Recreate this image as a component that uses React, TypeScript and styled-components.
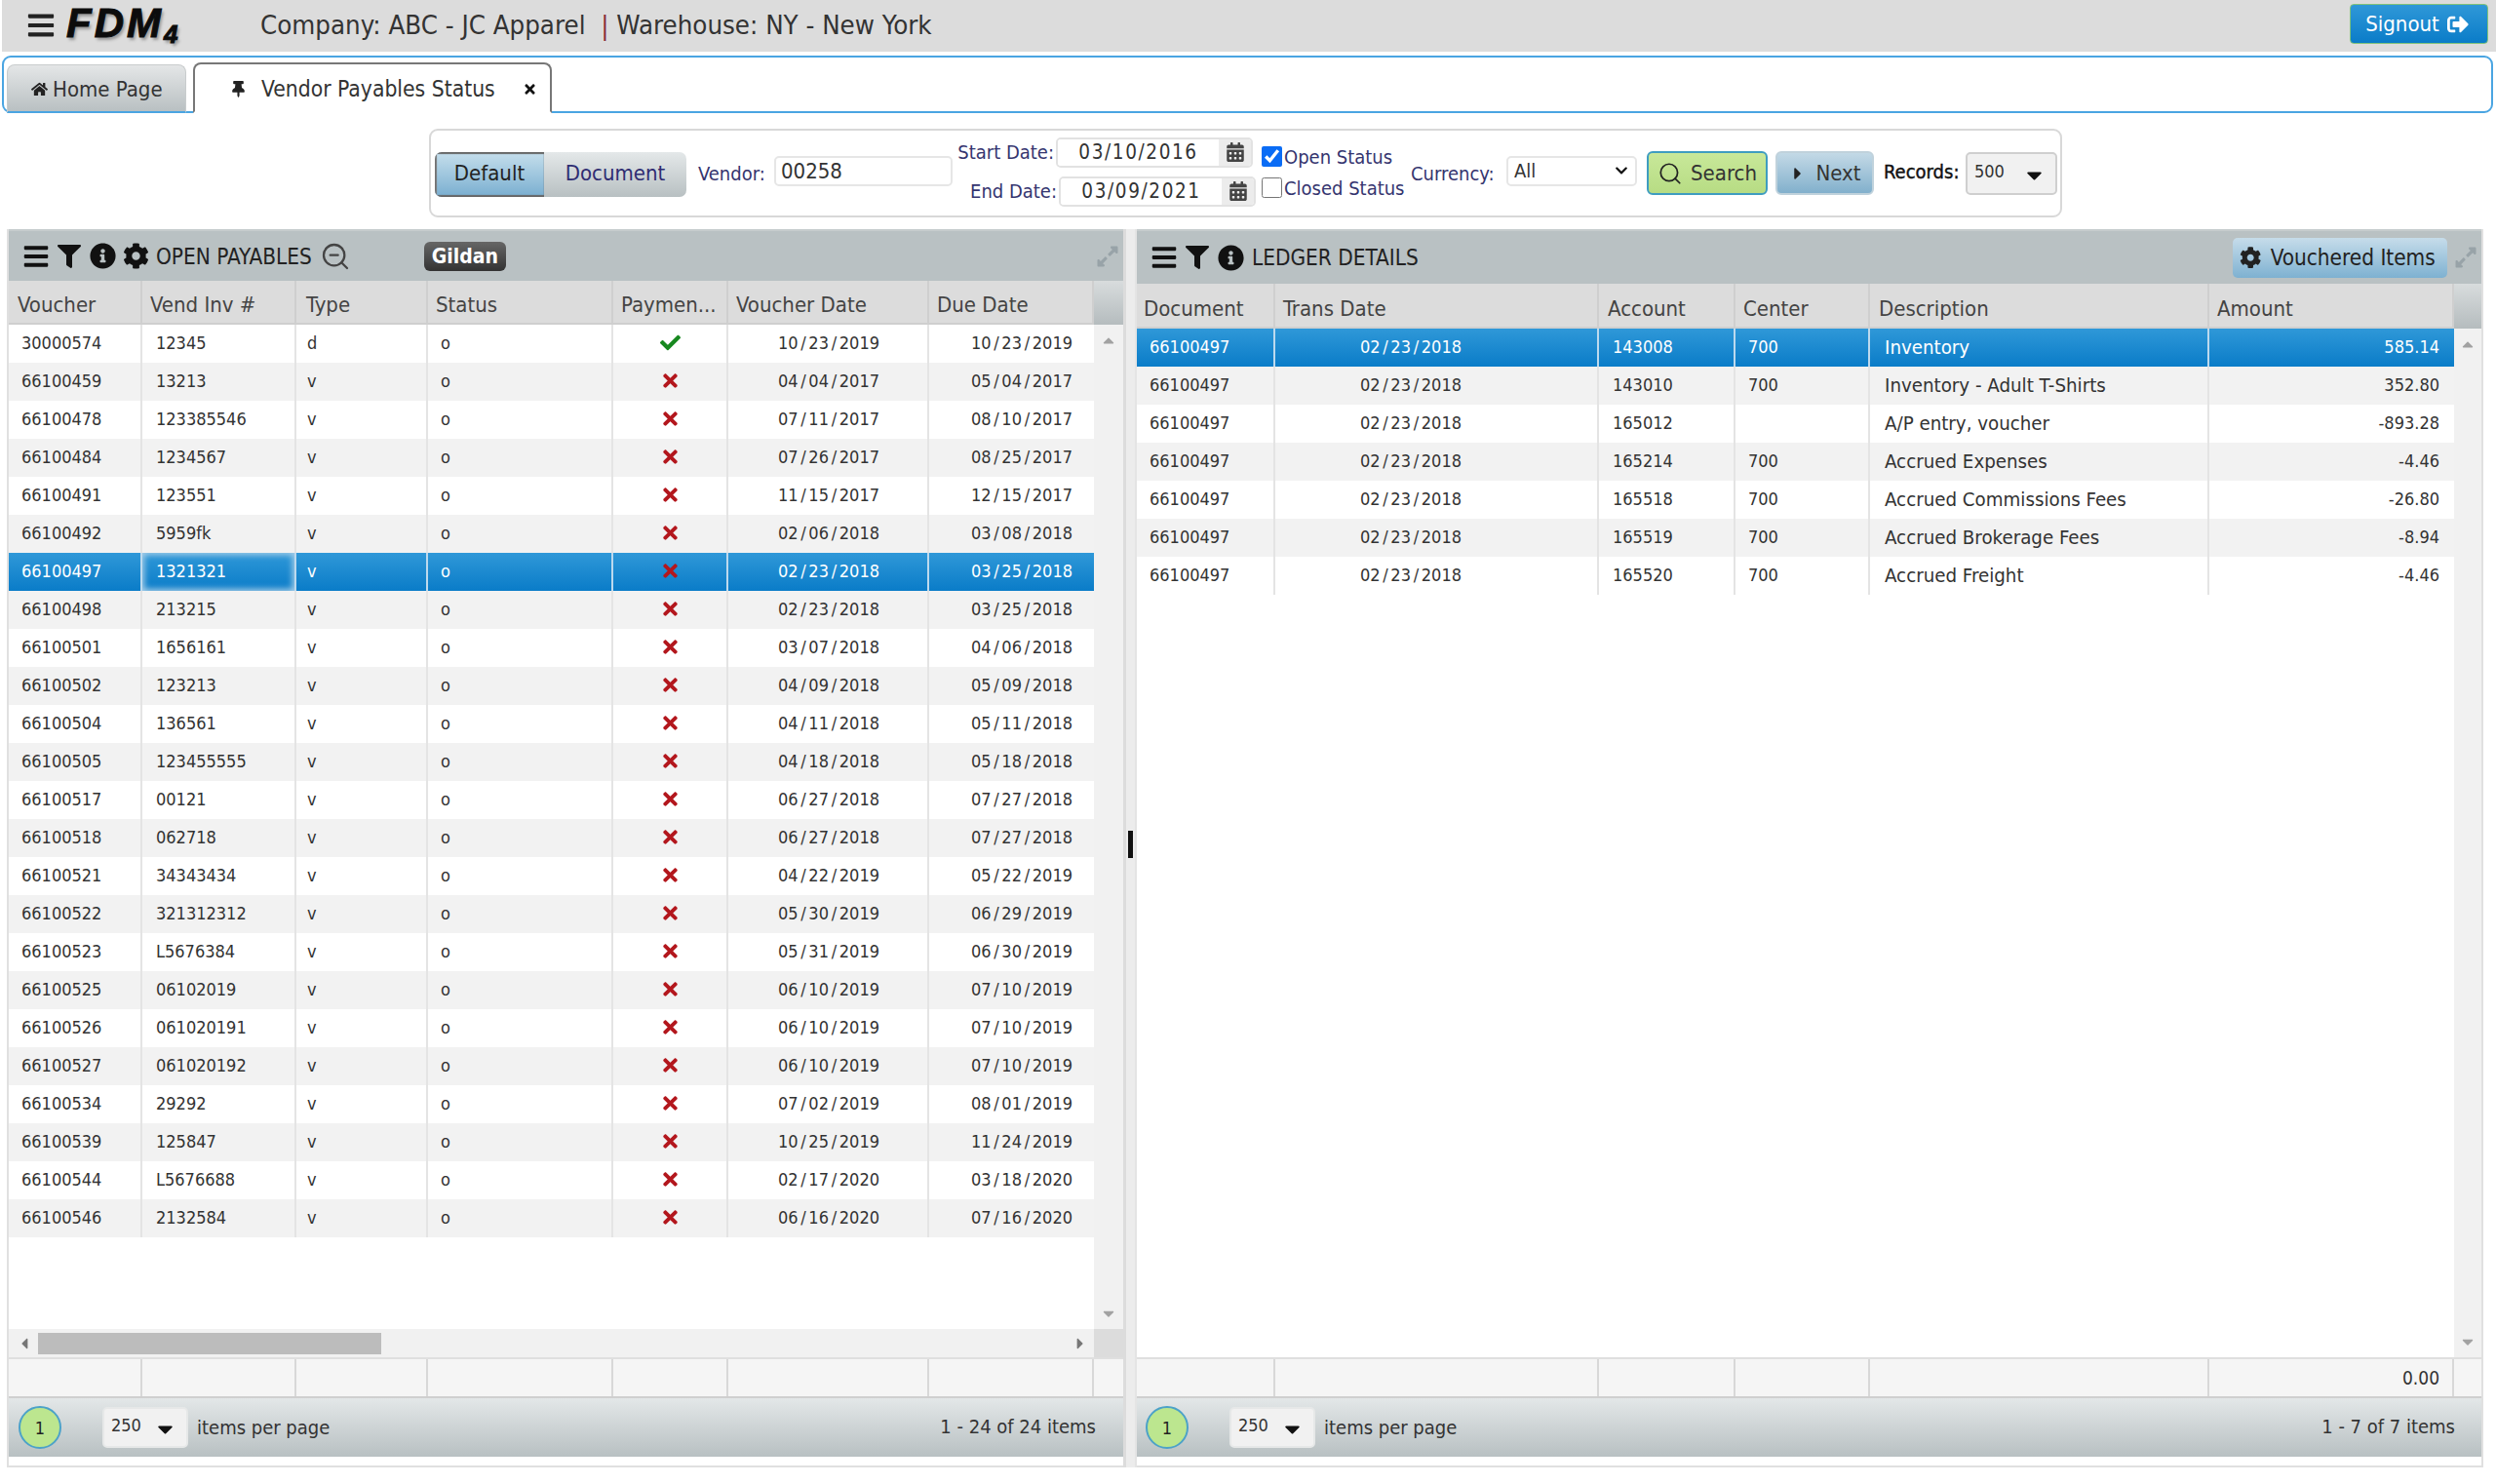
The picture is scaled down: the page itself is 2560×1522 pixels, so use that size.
import React from "react";
import styled, { createGlobalStyle } from "styled-components";
import {
  FaBars, FaFilter, FaInfoCircle, FaCog, FaHome, FaThumbtack, FaTimes, FaCheck,
  FaCalendarAlt, FaSignOutAlt, FaCaretRight, FaCaretDown, FaCaretUp, FaCaretLeft, FaExpandAlt, FaChevronDown,
} from "react-icons/fa";
import { ZoomOut, Search as SearchGlyph } from "lucide-react";

const FONT = `"DejaVu Sans Condensed", "DejaVu Sans", "Noto Sans", sans-serif`;

const Global = createGlobalStyle`
  html, body { margin: 0; padding: 0; background: #fff; }
  body { font-family: ${FONT}; font-stretch: condensed; font-size: 18px; color: #333; }
  * { box-sizing: border-box; }
`;

const Page = styled.div`
  width: 2560px; height: 1522px; overflow: hidden; background: #fff;
  display: flex; flex-direction: column;
`;

/* ---------- top bar ---------- */
const TopBar = styled.header`
  height: 53px; margin-left: 2px; background: #dcdcdc; flex: none;
  display: flex; align-items: center; color: #333;
`;
const MenuButton = styled.span`
  margin-left: 25px; font-size: 30px; color: #222; display: flex; margin-top: -2px;
`;
const Logo = styled.span`
  margin-left: 11px; width: 199px; flex: none; padding-bottom: 5px;
  font-family: "Liberation Sans", sans-serif; font-weight: 700; font-style: italic;
  font-size: 42px; line-height: 48px; color: #0c0c0c; letter-spacing: 3px;
  -webkit-text-stroke: 1px #0c0c0c; text-shadow: 2px 3px 3px #999;
  sub { font-size: 26px; line-height: 0; vertical-align: -6px; letter-spacing: 0; }
`;
const CompanyText = styled.span`
  font-size: 27.4px; color: #333; white-space: pre; margin-top: -3px;
  b { font-weight: 400; color: #8a2a3a; }
`;
const SignOut = styled.button`
  margin-left: auto; margin-right: 8px; width: 142px; height: 41px; margin-top: -4px; padding: 0 4px 0 0;
  border: 1px solid #7fc27a; border-radius: 4px;
  background: linear-gradient(#2f98d8, #0a7cc8); color: #fff;
  font: 22px ${FONT}; font-stretch: condensed; display: flex; align-items: center; justify-content: center; gap: 8px;
`;

/* ---------- tabs ---------- */
const TabStrip = styled.nav`
  height: 59px; margin: 4px 3px 0 2px; flex: none; border: 2px solid #4aa5e2; border-radius: 9px;
  display: flex; align-items: flex-end; gap: 7px; padding-left: 3px; background: #fff;
`;
const Tab = styled.div<{ $active?: boolean }>`
  height: ${p => (p.$active ? 52 : 50)}px; margin-bottom: -2px; padding-top: 2px; flex: none;
  width: ${p => (p.$active ? 368 : 184)}px;
  border-radius: 8px 8px 0 0; font-size: ${p => (p.$active ? 22.7 : 22)}px; color: #333; white-space: nowrap;
  display: flex; align-items: center;
  background: ${p => (p.$active ? "#fff" : "linear-gradient(#e4e6e7, #b9c0c2)")};
  border: ${p => (p.$active ? "2px solid #777" : "1px solid #c8cccd")};
  border-bottom: ${p => (p.$active ? "2px solid #fff" : "2px solid #4aa5e2")};
  padding-left: ${p => (p.$active ? 36 : 24)}px;
`;
const TabIcon = styled.span<{ $gap: number }>`
  display: flex; font-size: 17px; color: #222; margin-right: ${p => p.$gap}px;
`;
const TabClose = styled.span`
  display: flex; margin-left: 28px; font-size: 15px; color: #111;
`;

/* ---------- filter box ---------- */
const FilterBox = styled.section`
  width: 1675px; height: 91px; margin: 16px 0 0 440px; flex: none;
  border: 2px solid #d8d8d8; border-radius: 9px;
  display: flex; align-items: center; padding-left: 4px; font-size: 20px;
`;
const ModeGroup = styled.div`
  display: flex; width: 258px; height: 46px; border-radius: 7px; overflow: hidden; flex: none; margin-top: 2px;
`;
const ModeButton = styled.div<{ $active?: boolean; $w: number }>`
  width: ${p => p.$w}px; display: flex; align-items: center; justify-content: center; font-size: 22px; padding-bottom: 3px;
  color: ${p => (p.$active ? "#222" : "#2f2d72")};
  background: ${p => (p.$active ? "linear-gradient(#c6dfec, #79aed0)" : "linear-gradient(#e4e8e9, #b8c0c2)")};
  box-shadow: ${p => (p.$active ? "inset 0 2px 1px #666, inset 0 -2px 1px #666, inset 2px 0 1px #777" : "none")};
`;
const FieldLabel = styled.label<{ $w?: number; $dark?: boolean }>`
  flex: none; font-size: 20px; white-space: nowrap; color: ${p => (p.$dark ? "#111" : "#35356f")};
  ${p => (p.$w ? `width: ${p.$w}px;` : "")}
`;
const VendorLabel = styled(FieldLabel)`margin-left: 12px; margin-top: 0;`;
const VendorInput = styled.input`
  width: 183px; height: 31px; margin: -5px 0 0 11px; flex: none;
  border: 2px solid #e6e6e6; border-radius: 5px; padding: 0 5px; background: #fff;
  font: 22px ${FONT}; font-stretch: condensed; color: #333; outline: none;
`;
const DateColumn = styled.div`
  display: flex; flex-direction: column; gap: 9px; margin-left: 3px; flex: none; margin-top: -3px; width: 308px;
`;
const DateRow = styled.div<{ $shift: number }>`
  display: flex; align-items: center; justify-content: flex-end; padding-right: ${p => p.$shift}px;
`;
const DateBox = styled.div`
  width: 202px; height: 31px; margin-left: 2px; flex: none; display: flex;
  border: 2px solid #e2e2e2; border-radius: 5px; overflow: hidden;
`;
const DateInput = styled.input`
  width: 165px; border: 0; outline: none; text-align: center; background: #fff; padding: 0;
  font: 20.5px ${FONT}; font-stretch: condensed; color: #333; letter-spacing: 1.6px;
`;
const CalendarCell = styled.span`
  flex: 1; background: #ececec; display: flex; align-items: center; justify-content: center;
  font-size: 20px; color: #444;
`;
const StatusColumn = styled.div`
  display: flex; flex-direction: column; gap: 8px; margin-left: 6px; width: 153px; flex: none; margin-top: -2px;
`;
const StatusLine = styled.label`
  display: flex; align-items: center; font-size: 20px; color: #35356f; white-space: nowrap;
`;
const StatusBox = styled.input`
  width: 21px; height: 21px; margin: 0 2px 0 0; flex: none; accent-color: #0a6cf5;
`;
const SelectShell = styled.span`
  position: relative; flex: none; width: 134px; height: 31px; margin: -5px 0 0 10px; display: block;
  svg { position: absolute; right: 9px; top: 8px; font-size: 14px; color: #111; pointer-events: none; }
`;
const CurrencySelect = styled.select`
  appearance: none; width: 100%; height: 100%; display: block;
  border: 2px solid #e6e6e6; border-radius: 5px; background: #fff; padding-left: 6px;
  font: 20px ${FONT}; font-stretch: condensed; color: #333;
`;
const ActionButton = styled.div<{ $tone: "green" | "blue"; $w: number; $ml: number }>`
  width: ${p => p.$w}px; height: 45px; margin: 0 0 0 ${p => p.$ml}px; flex: none; border-radius: 6px;
  display: flex; align-items: center; justify-content: center; gap: 8px; font-size: 22px; color: #333; white-space: nowrap;
  background: ${p => (p.$tone === "green" ? "linear-gradient(#c8e899, #b7dc84)" : "linear-gradient(#c3d9e6, #82b0cc)")};
  border: 2px solid ${p => (p.$tone === "green" ? "#3f9dc0" : "#c0d2dc")};
`;
const RecordsLabel = styled(FieldLabel)`margin-left: 10px; margin-right: 2px; -webkit-text-stroke: 0.4px #111; margin-top: -3px;`;
const PseudoSelect = styled.div<{ $w: number; $ml?: number }>`
  width: ${p => p.$w}px; height: ${p => (p.$ml ? 42 : 44)}px; flex: none; margin-left: ${p => p.$ml ?? 0}px;
  background: #f1f1f1; border: 2px solid ${p => (p.$ml ? "#e6e8e8" : "#cfcfcf")}; border-radius: 5px;
  display: flex; align-items: center; justify-content: space-between; padding: 0 9px 0 7px;
  font-size: 18px; color: #333;
  span { margin-top: -5px; }
  svg { font-size: 25px; color: #111; margin-top: 3px; }
`;

/* ---------- panels ---------- */
const Workspace = styled.main`
  display: flex; margin: 12px 0 0 7px; width: 2540px; height: 1270px; flex: none;
`;
const Panel = styled.section<{ $side: "left" | "right" }>`
  width: ${p => (p.$side === "left" ? 1145 : 1381)}px; flex: none;
  display: flex; flex-direction: column;
  border-bottom: 2px solid #e0e0e0;
  ${p => (p.$side === "left" ? "border-left: 2px solid #e0e0e0;" : "border-right: 2px solid #e0e0e0;")}
`;
const Splitter = styled.div`
  width: 14px; flex: none; background: #ececec; border-left: 3px solid #dcdcdc; border-right: 2px solid #e4e4e4;
  display: flex; align-items: center; justify-content: center;
`;
const SplitHandle = styled.span`
  width: 5px; height: 28px; background: #111; margin-top: -8px;
`;
const PanelHeader = styled.div<{ $h: number }>`
  height: ${p => p.$h}px; flex: none; background: #b9c1c3; display: flex; align-items: center;
  border-top: 2px solid #c6cccd; padding-left: 14px; color: #111;
`;
const ToolIcon = styled.span<{ $size: number; $ml?: number }>`
  display: flex; font-size: ${p => p.$size}px; color: #111; margin-left: ${p => p.$ml ?? 0}px;
`;
const PanelTitle = styled.span<{ $ml: number }>`
  font-size: 22.4px; color: #222; margin-left: ${p => p.$ml}px; white-space: nowrap;
`;
const GlassIcon = styled.span`
  display: flex; margin-left: 8px; color: #444;
`;
const VendorBadge = styled.span`
  margin-left: 75px; width: 84px; height: 30px; border-radius: 6px;
  background: linear-gradient(#666, #333); color: #fff; font-size: 21px; font-weight: 700;
  display: flex; align-items: center; justify-content: center; white-space: nowrap;
`;
const ExpandIcon = styled.span<{ $mr: number; $ml?: string }>`
  display: flex; font-size: 24px; color: #98a3a8; margin-left: ${p => p.$ml ?? "auto"}; margin-right: ${p => p.$mr}px;
`;
const VoucheredButton = styled.div`
  margin-left: auto; width: 220px; height: 41px; border-radius: 5px; white-space: nowrap; padding-right: 5px;
  background: linear-gradient(#c6dcea, #7eb1d1); color: #222; font-size: 22.4px;
  display: flex; align-items: center; justify-content: center; gap: 9px;
`;
const GridRow = styled.div<{ $cols: string; $h: number }>`
  display: grid; grid-template-columns: ${p => p.$cols}; height: ${p => p.$h}px; flex: none;
`;
const HeadCell = styled.div<{ $pad: number; $last?: boolean }>`
  background: #dcdcdc; font-size: 22px; color: #444; display: flex; align-items: center;
  padding-left: ${p => p.$pad}px; padding-top: 6px; white-space: nowrap; overflow: hidden;
  border-right: 2px solid ${p => (p.$last ? "transparent" : "#cfcfcf")};
  border-bottom: 2px solid #cfcfcf;
`;
const ScrollCap = styled.div`
  background: linear-gradient(#d8dcdd, #b5bcbe);
`;
const BodyArea = styled.div<{ $h: number }>`
  height: ${p => p.$h}px; flex: none; display: flex;
`;
const Rows = styled.div`flex: 1; background: #fff; min-width: 0;`;
const DataRow = styled.div<{ $cols: string; $alt: boolean; $sel: boolean }>`
  display: grid; grid-template-columns: ${p => p.$cols}; height: 39px; font-size: 18px;
  color: ${p => (p.$sel ? "#fff" : "#333")};
  background: ${p => (p.$sel ? "linear-gradient(#2f98d8, #0a7cc8)" : p.$alt ? "#f2f2f2" : "#fff")};
`;
const Cell = styled.div<{ $right?: number; $pad?: number; $center?: boolean; $focus?: boolean; $sel: boolean; $last?: boolean; $wide?: boolean }>`
  display: flex; align-items: center; white-space: nowrap; overflow: hidden; padding-bottom: 2px;
  justify-content: ${p => (p.$center ? "center" : p.$right !== undefined ? "flex-end" : "flex-start")};
  padding-left: ${p => p.$pad ?? 0}px; padding-right: ${p => p.$right ?? 0}px;
  border-right: 2px solid ${p => (p.$last ? "transparent" : p.$sel ? "#bcd9ee" : "#e4e4e4")};
  ${p => (p.$focus ? "box-shadow: inset 0 0 6px 2px #a8cfe9;" : "")}
  ${p => (p.$wide ? "font-size: 20.3px;" : "")}
`;
const Slash = styled.span`margin: 0 2.7px;`;
const PayIcon = styled.span<{ $ok: boolean }>`
  display: flex; font-size: 21px; color: ${p => (p.$ok ? "#17881f" : "#b3171d")};
`;
const VScroll = styled.div<{ $w: number }>`
  width: ${p => p.$w}px; flex: none; background: #f1f1f1; display: flex; flex-direction: column;
  justify-content: space-between; align-items: center; padding: 7px 0; color: #a2a2a2; font-size: 18px;
  svg { display: block; }
`;
const HScroll = styled.div`
  height: 29px; flex: none; background: #f1f1f1; display: flex; align-items: center;
  color: #777; font-size: 18px; padding-left: 7px;
  svg { flex: none; }
`;
const HThumb = styled.span`
  width: 352px; height: 22px; background: #bcbcbc; margin-left: 5px;
`;
const HRight = styled.span`
  margin-left: auto; display: flex; margin-right: 5px;
`;
const ScrollCorner = styled.span`
  width: 30px; height: 100%; background: #dcdcdc; flex: none;
`;
const FootRow = styled.div<{ $cols: string }>`
  display: grid; grid-template-columns: ${p => p.$cols}; height: 42px; flex: none; background: #f5f5f5;
  border-top: 2px solid #dfdfdf; border-bottom: 2px solid #cfcfcf; font-size: 19px; color: #333;
`;
const FootCell = styled.div<{ $right?: number }>`
  border-right: 2px solid #d8d8d8; display: flex; align-items: center; justify-content: flex-end;
  padding-right: ${p => p.$right ?? 0}px;
`;
const Pager = styled.div<{ $pad: number; $end: number }>`
  height: 60px; flex: none; background: linear-gradient(#e3e7e8, #b8c0c2);
  display: flex; align-items: center; padding-left: ${p => p.$pad}px; padding-right: ${p => p.$end}px; font-size: 20px; color: #333;
`;
const PageDot = styled.span`
  width: 44px; height: 44px; border-radius: 50%; background: #bce68f; border: 2px solid #4ca2c8;
  display: flex; align-items: center; justify-content: center; font-size: 18px; color: #222; flex: none;
`;
const PerPage = styled.span`margin-left: 9px; white-space: nowrap;`;
const Range = styled.span`margin-left: auto; white-space: nowrap; margin-top: -3px;`;
const PanelRest = styled.div`flex: 1; background: #fff;`;

/* ---------- data ---------- */
const leftData: [string, string, string, string, string][] = [
  ["30000574","12345","d","10/23/2019","10/23/2019"],["66100459","13213","v","04/04/2017","05/04/2017"],
  ["66100478","123385546","v","07/11/2017","08/10/2017"],["66100484","1234567","v","07/26/2017","08/25/2017"],
  ["66100491","123551","v","11/15/2017","12/15/2017"],["66100492","5959fk","v","02/06/2018","03/08/2018"],
  ["66100497","1321321","v","02/23/2018","03/25/2018"],["66100498","213215","v","02/23/2018","03/25/2018"],
  ["66100501","1656161","v","03/07/2018","04/06/2018"],["66100502","123213","v","04/09/2018","05/09/2018"],
  ["66100504","136561","v","04/11/2018","05/11/2018"],["66100505","123455555","v","04/18/2018","05/18/2018"],
  ["66100517","00121","v","06/27/2018","07/27/2018"],["66100518","062718","v","06/27/2018","07/27/2018"],
  ["66100521","34343434","v","04/22/2019","05/22/2019"],["66100522","321312312","v","05/30/2019","06/29/2019"],
  ["66100523","L5676384","v","05/31/2019","06/30/2019"],["66100525","06102019","v","06/10/2019","07/10/2019"],
  ["66100526","061020191","v","06/10/2019","07/10/2019"],["66100527","061020192","v","06/10/2019","07/10/2019"],
  ["66100534","29292","v","07/02/2019","08/01/2019"],["66100539","125847","v","10/25/2019","11/24/2019"],
  ["66100544","L5676688","v","02/17/2020","03/18/2020"],["66100546","2132584","v","06/16/2020","07/16/2020"],
];
const rightData: [string, string, string, string, string][] = [
  ["143008","700","Inventory","585.14","02/23/2018"],["143010","700","Inventory - Adult T-Shirts","352.80","02/23/2018"],
  ["165012","","A/P entry, voucher","-893.28","02/23/2018"],["165214","700","Accrued Expenses","-4.46","02/23/2018"],
  ["165518","700","Accrued Commissions Fees","-26.80","02/23/2018"],["165519","700","Accrued Brokerage Fees","-8.94","02/23/2018"],
  ["165520","700","Accrued Freight","-4.46","02/23/2018"],
];
const L_COLS = "137px 158px 135px 190px 118px 206px 169px";
const L_HEAD_COLS = L_COLS + " 30px";
const R_COLS = "142px 332px 140px 138px 348px 251px";
const R_HEAD_COLS = R_COLS + " 28px";

const leftHeads: [string, number][] = [["Voucher",9],["Vend Inv #",8],["Type",10],["Status",8],["Paymen...",8],["Voucher Date",8],["Due Date",8]];
const rightHeads: [string, number][] = [["Document",7],["Trans Date",8],["Account",9],["Center",8],["Description",9],["Amount",8]];

const DateText = ({ value }: { value: string }) => {
  const [m, d, y] = value.split("/");
  return <span>{m}<Slash>/</Slash>{d}<Slash>/</Slash>{y}</span>;
};

const PanelPager = ({ range, pad, end, dot }: { range: string; pad: number; end: number; dot: number }) => (
  <Pager $pad={pad} $end={end}>
    <PageDot>1</PageDot>
    <PseudoSelect $w={88} $ml={dot}><span>250</span><FaCaretDown /></PseudoSelect>
    <PerPage>items per page</PerPage>
    <Range>{range}</Range>
  </Pager>
);

export default function App() {
  return (
    <Page>
      <Global />
      <TopBar>
        <MenuButton><FaBars /></MenuButton>
        <Logo>FDM<sub>4</sub></Logo>
        <CompanyText>Company: ABC - JC Apparel  <b>|</b> Warehouse: NY - New York</CompanyText>
        <SignOut>Signout <FaSignOutAlt /></SignOut>
      </TopBar>

      <TabStrip>
        <Tab><TabIcon $gap={5}><FaHome /></TabIcon>Home Page</Tab>
        <Tab $active><TabIcon $gap={15}><FaThumbtack /></TabIcon>Vendor Payables Status<TabClose><FaTimes /></TabClose></Tab>
      </TabStrip>

      <FilterBox>
        <ModeGroup>
          <ModeButton $active $w={112}>Default</ModeButton>
          <ModeButton $w={146}>Document</ModeButton>
        </ModeGroup>
        <VendorLabel $w={67}>Vendor:</VendorLabel>
        <VendorInput readOnly value="00258" />
        <DateColumn>
          <DateRow $shift={3}>
            <FieldLabel>Start Date:</FieldLabel>
            <DateBox><DateInput readOnly value="03/10/2016" /><CalendarCell><FaCalendarAlt /></CalendarCell></DateBox>
          </DateRow>
          <DateRow $shift={0}>
            <FieldLabel>End Date:</FieldLabel>
            <DateBox><DateInput readOnly value="03/09/2021" /><CalendarCell><FaCalendarAlt /></CalendarCell></DateBox>
          </DateRow>
        </DateColumn>
        <StatusColumn>
          <StatusLine><StatusBox type="checkbox" defaultChecked />Open Status</StatusLine>
          <StatusLine><StatusBox type="checkbox" />Closed Status</StatusLine>
        </StatusColumn>
        <FieldLabel $w={88}>Currency:</FieldLabel>
        <SelectShell>
          <CurrencySelect defaultValue="All"><option>All</option></CurrencySelect>
          <FaChevronDown />
        </SelectShell>
        <ActionButton $tone="green" $w={124} $ml={10}><SearchGlyph size={26} strokeWidth={1.6} color="#222" />Search</ActionButton>
        <ActionButton $tone="blue" $w={101} $ml={8}><FaCaretRight size={20} color="#222" />Next</ActionButton>
        <RecordsLabel $dark $w={82}>Records:</RecordsLabel>
        <PseudoSelect $w={94}><span>500</span><FaCaretDown /></PseudoSelect>
      </FilterBox>

      <Workspace>
        <Panel $side="left">
          <PanelHeader $h={53}>
            <ToolIcon $size={28}><FaBars /></ToolIcon>
            <ToolIcon $size={24} $ml={8}><FaFilter /></ToolIcon>
            <ToolIcon $size={27} $ml={9}><FaInfoCircle /></ToolIcon>
            <ToolIcon $size={27} $ml={7}><FaCog /></ToolIcon>
            <PanelTitle $ml={7}>OPEN PAYABLES</PanelTitle>
            <GlassIcon><ZoomOut size={32} strokeWidth={1.7} /></GlassIcon>
            <VendorBadge>Gildan</VendorBadge>
            <ExpandIcon $mr={4}><FaExpandAlt /></ExpandIcon>
          </PanelHeader>
          <GridRow $cols={L_HEAD_COLS} $h={45}>
            {leftHeads.map(([t, pad]) => <HeadCell key={t} $pad={pad}>{t}</HeadCell>)}
            <ScrollCap />
          </GridRow>
          <BodyArea $h={1030}>
            <Rows>
              {leftData.map((r, i) => {
                const sel = i === 6;
                return (
                  <DataRow key={r[0]} $cols={L_COLS} $alt={i % 2 === 1} $sel={sel}>
                    <Cell $sel={sel} $pad={13}>{r[0]}</Cell>
                    <Cell $sel={sel} $pad={14} $focus={sel}>{r[1]}</Cell>
                    <Cell $sel={sel} $pad={11}>{r[2]}</Cell>
                    <Cell $sel={sel} $pad={13}>o</Cell>
                    <Cell $sel={sel} $center><PayIcon $ok={i === 0}>{i === 0 ? <FaCheck /> : <FaTimes />}</PayIcon></Cell>
                    <Cell $sel={sel} $right={49}><DateText value={r[3]} /></Cell>
                    <Cell $sel={sel} $right={20} $last><DateText value={r[4]} /></Cell>
                  </DataRow>
                );
              })}
            </Rows>
            <VScroll $w={30}><FaCaretUp /><FaCaretDown /></VScroll>
          </BodyArea>
          <HScroll>
            <FaCaretLeft />
            <HThumb />
            <HRight><FaCaretRight /></HRight>
            <ScrollCorner />
          </HScroll>
          <FootRow $cols={L_HEAD_COLS}>
            {leftHeads.map(([t]) => <FootCell key={t} />)}
          </FootRow>
          <PanelPager range="1 - 24 of 24 items" pad={10} end={28} dot={42} />
          <PanelRest />
        </Panel>

        <Splitter><SplitHandle /></Splitter>

        <Panel $side="right">
          <PanelHeader $h={56}>
            <ToolIcon $size={28}><FaBars /></ToolIcon>
            <ToolIcon $size={24} $ml={8}><FaFilter /></ToolIcon>
            <ToolIcon $size={27} $ml={9}><FaInfoCircle /></ToolIcon>
            <PanelTitle $ml={8}>LEDGER DETAILS</PanelTitle>
            <VoucheredButton><FaCog />Vouchered Items</VoucheredButton>
            <ExpandIcon $mr={4} $ml="7px"><FaExpandAlt /></ExpandIcon>
          </PanelHeader>
          <GridRow $cols={R_HEAD_COLS} $h={46}>
            {rightHeads.map(([t, pad]) => <HeadCell key={t} $pad={pad}>{t}</HeadCell>)}
            <ScrollCap />
          </GridRow>
          <BodyArea $h={1055}>
            <Rows>
              {rightData.map((r, i) => {
                const sel = i === 0;
                return (
                  <DataRow key={r[0]} $cols={R_COLS} $alt={i % 2 === 1} $sel={sel}>
                    <Cell $sel={sel} $pad={13}>66100497</Cell>
                    <Cell $sel={sel} $right={139}><DateText value={r[4]} /></Cell>
                    <Cell $sel={sel} $pad={14}>{r[0]}</Cell>
                    <Cell $sel={sel} $pad={13}>{r[1]}</Cell>
                    <Cell $sel={sel} $pad={15} $wide>{r[2]}</Cell>
                    <Cell $sel={sel} $right={13} $last>{r[3]}</Cell>
                  </DataRow>
                );
              })}
            </Rows>
            <VScroll $w={28}><FaCaretUp /><FaCaretDown /></VScroll>
          </BodyArea>
          <FootRow $cols={R_HEAD_COLS}>
            {rightHeads.map(([t]) => <FootCell key={t} $right={13}>{t === "Amount" ? "0.00" : ""}</FootCell>)}
          </FootRow>
          <PanelPager range="1 - 7 of 7 items" pad={9} end={27} dot={42} />
          <PanelRest />
        </Panel>
      </Workspace>
    </Page>
  );
}
